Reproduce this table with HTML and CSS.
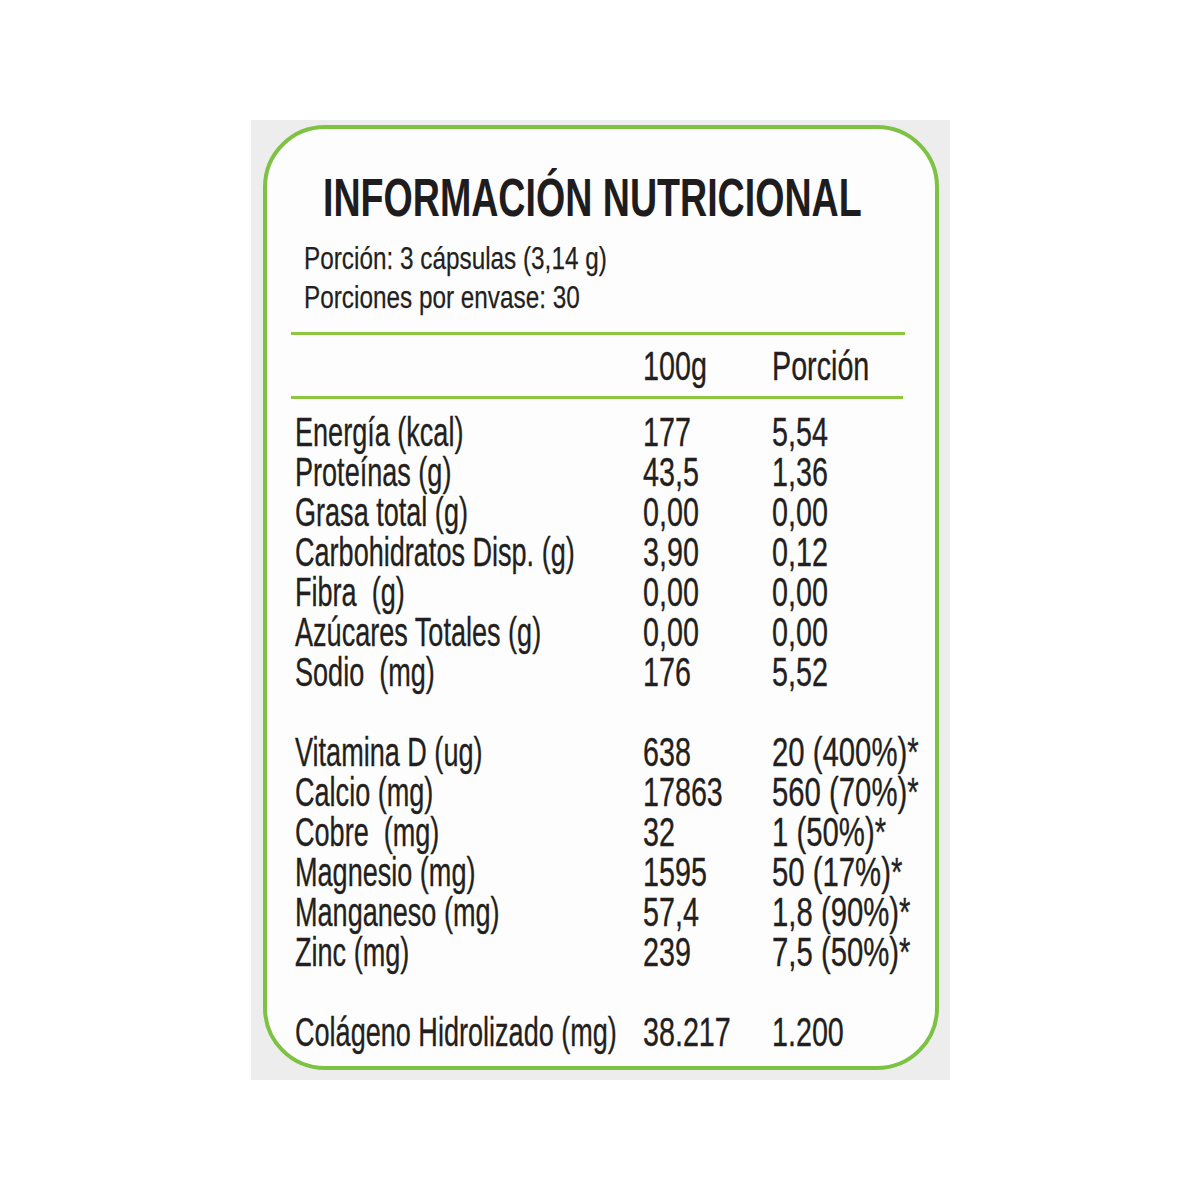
FILE: index.html
```html
<!DOCTYPE html>
<html lang="es">
<head>
<meta charset="utf-8">
<title>Información Nutricional</title>
<link rel="stylesheet" href="styles.css">
</head>
<body>
<div class="panel">
  <div class="card">
    <div class="title">INFORMACIÓN NUTRICIONAL</div>
    <div class="serving">
      <div class="sline">Porción: 3 cápsulas (3,14 g)</div>
      <div class="sline">Porciones por envase: 30</div>
    </div>
    <div class="rule rule1"></div>
    <div class="row head"><div class="lab"></div><div class="num">100g</div><div class="num">Porción</div></div>
    <div class="rule rule2"></div>
    <div class="rows">
      <div class="row"><div class="lab">Energía (kcal)</div><div class="num">177</div><div class="num">5,54</div></div>
      <div class="row"><div class="lab">Proteínas (g)</div><div class="num">43,5</div><div class="num">1,36</div></div>
      <div class="row"><div class="lab">Grasa total (g)</div><div class="num">0,00</div><div class="num">0,00</div></div>
      <div class="row"><div class="lab">Carbohidratos Disp. (g)</div><div class="num">3,90</div><div class="num">0,12</div></div>
      <div class="row"><div class="lab">Fibra&nbsp; (g)</div><div class="num">0,00</div><div class="num">0,00</div></div>
      <div class="row"><div class="lab">Azúcares Totales (g)</div><div class="num">0,00</div><div class="num">0,00</div></div>
      <div class="row"><div class="lab">Sodio&nbsp; (mg)</div><div class="num">176</div><div class="num">5,52</div></div>
      <div class="gap"></div>
      <div class="row"><div class="lab">Vitamina D (ug)</div><div class="num">638</div><div class="num pct">20 (400%)*</div></div>
      <div class="row"><div class="lab">Calcio (mg)</div><div class="num">17863</div><div class="num pct">560 (70%)*</div></div>
      <div class="row"><div class="lab">Cobre&nbsp; (mg)</div><div class="num">32</div><div class="num pct">1 (50%)*</div></div>
      <div class="row"><div class="lab">Magnesio (mg)</div><div class="num">1595</div><div class="num pct">50 (17%)*</div></div>
      <div class="row"><div class="lab">Manganeso (mg)</div><div class="num">57,4</div><div class="num pct">1,8 (90%)*</div></div>
      <div class="row"><div class="lab">Zinc (mg)</div><div class="num">239</div><div class="num pct">7,5 (50%)*</div></div>
      <div class="gap"></div>
      <div class="row"><div class="lab">Colágeno Hidrolizado (mg)</div><div class="num">38.217</div><div class="num">1.200</div></div>
    </div>
  </div>
</div>
</body>
</html>
```
FILE: styles.css
```css
html, body {
  margin: 0;
  padding: 0;
  background: #ffffff;
}
body {
  width: 1200px;
  height: 1200px;
  overflow: hidden;
  font-family: "Liberation Sans", Arial, sans-serif;
  color: #231f20;
}
.panel {
  margin: 120px 0 0 251px;
  width: 699px;
  height: 960px;
  background: #ededed;
  padding: 5px 0 0 12px;
  box-sizing: border-box;
}
.card {
  width: 676px;
  height: 945px;
  box-sizing: border-box;
  border: 4px solid #7dc242;
  border-radius: 62px;
  background: #fdfdfd;
  padding: 41px 0 0 24px;
}
.title {
  margin-left: 32px;
  font-weight: 700;
  font-size: 54px;
  line-height: 54px;
  color: #1e1c1d;
  white-space: nowrap;
  transform: scaleX(0.696);
  transform-origin: left center;
}
.serving {
  margin: 15px 0 0 13px;
}
.sline {
  font-size: 32px;
  line-height: 39px;
  white-space: nowrap;
  -webkit-text-stroke: 0.25px #231f20;
  transform: scaleX(0.76);
  transform-origin: left center;
}
.rule {
  background: #8dc63f;
  height: 3px;
}
.rule1 {
  margin-top: 15px;
  width: 614px;
}
.rule2 {
  margin-top: 10px;
  width: 612px;
}
.head {
  margin-top: 11px;
}
.rows {
  margin-top: 13px;
}
.row {
  display: grid;
  grid-template-columns: 348px 129px 1fr;
  padding-left: 4px;
  height: 40px;
  font-size: 41px;
  line-height: 40px;
}
.lab, .num {
  white-space: nowrap;
  transform-origin: left center;
  -webkit-text-stroke: 0.35px #231f20;
}
.lab {
  transform: scaleX(0.66);
}
.num {
  transform: scaleX(0.70);
}
.num.pct {
  transform: scaleX(0.715);
}
.gap {
  height: 40px;
}
```
